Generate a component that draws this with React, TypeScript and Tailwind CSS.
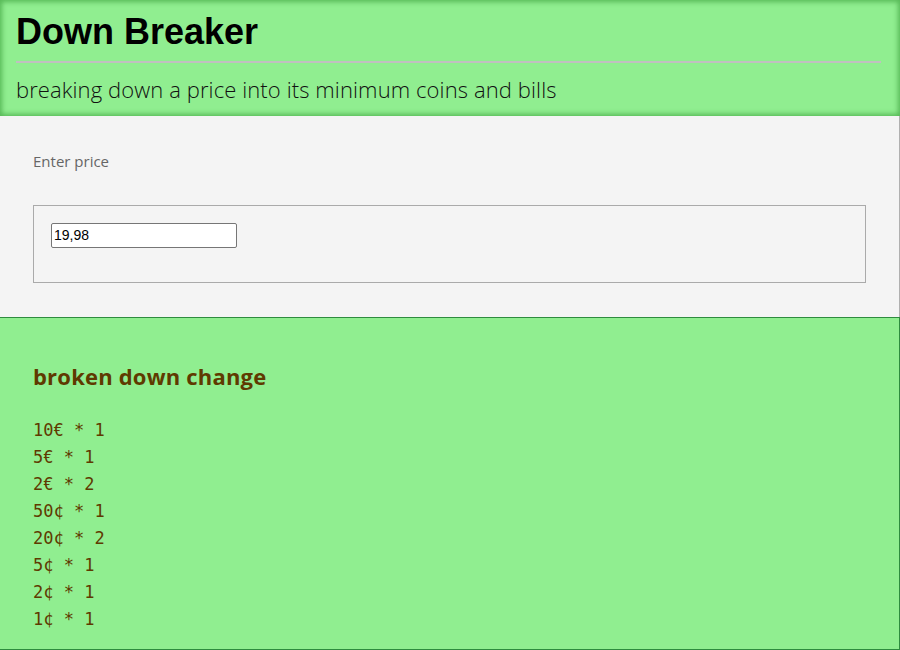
const rows = [
  ['10€', 1],
  ['5€', 1],
  ['2€', 2],
  ['50¢', 1],
  ['20¢', 2],
  ['5¢', 1],
  ['2¢', 1],
  ['1¢', 1],
]

export default function App() {
  return (
    <div className="w-[900px] h-[650px] overflow-hidden bg-[#f4f4f4] font-['Open_Sans',sans-serif]">
      <header className="h-[116px] bg-[#90ee90] px-4 pt-[10px] shadow-[inset_0_0_5px_2px_rgba(40,140,40,0.55)]">
        <h1 className="font-['Liberation_Sans',sans-serif] text-[36px] font-bold leading-[44px] text-black">Down Breaker</h1>
        <hr className="mt-[7px] w-[865px] border-t-2 border-[#c0c0c0]" />
        <p className="mt-[12px] text-[22px] font-light leading-[28px] tracking-[0.1px] text-[#111]">breaking down a price into its minimum coins and bills</p>
      </header>

      <section className="h-[201px] border-r border-[#b0b0b0] px-[33px] pt-[34px]">
        <label className="block text-[15px] leading-[22px] text-[#666]">Enter price</label>
        <div className="mt-[33px] h-[78px] w-[833px] border border-[#aaa] px-[17px] pt-[16px]">
          <input
            defaultValue="19,98"
            className="h-[25px] w-[186px] rounded-[2px] border border-[#767676] bg-white px-[2px] font-['Liberation_Sans',sans-serif] text-[14px] text-black outline-none"
          />
        </div>
      </section>

      <section className="h-[333px] border border-l-0 border-[#2e8b3e] bg-[#90ee90] px-[33px] pt-[43px]">
        <h2 className="text-[22px] font-bold leading-[30px] tracking-[0.2px] text-[#5f3a00]">broken down change</h2>
        <ul className="mt-[26px] font-['DejaVu_Sans_Mono',monospace] text-[17px] leading-[27px] text-[#5f3a00]">
          {rows.map(([unit, count]) => (
            <li key={unit as string}>{unit} * {count}</li>
          ))}
        </ul>
      </section>
    </div>
  )
}
